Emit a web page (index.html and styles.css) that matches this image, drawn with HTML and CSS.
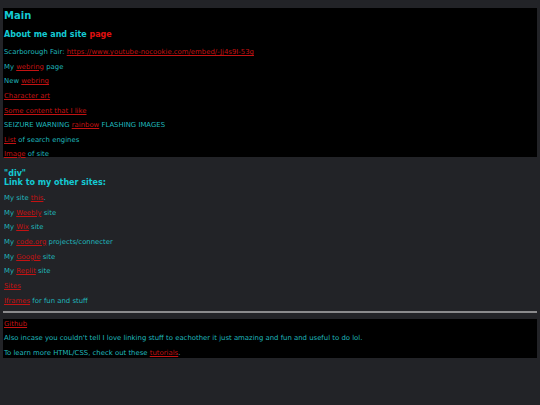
FILE: index.html
```html
<!DOCTYPE html>
<html>
<head>
<meta charset="utf-8">
<link rel="stylesheet" href="styles.css">
</head>
<body>
<div class="box top">
  <h1 class="title">Main</h1>
  <h2 class="sub">About me and site <a href="#">page</a></h2>
  <p>Scarborough Fair: <a href="#">https://www.youtube-nocookie.com/embed/-Jj4s9I-53g</a></p>
  <p>My <a href="#">webring</a> page</p>
  <p>New <a href="#">webring</a></p>
  <p><a href="#">Character art</a></p>
  <p><a href="#">Some content that I like</a></p>
  <p>SEIZURE WARNING <a href="#">rainbow</a> FLASHING IMAGES</p>
  <p><a href="#">List</a> of search engines</p>
  <p class="last"><a href="#">Image</a> of site</p>
</div>
<div class="middle">
  <h2 class="sub tight">"div"<br>Link to my other sites:</h2>
  <p>My site <a href="#">this</a>.</p>
  <p>My <a href="#">Weebly</a> site</p>
  <p>My <a href="#">Wix</a> site</p>
  <p>My <a href="#">code.org</a> projects/connecter</p>
  <p>My <a href="#">Google</a> site</p>
  <p>My <a href="#">Replit</a> site</p>
  <p><a href="#">Sites</a></p>
  <p><a href="#">Iframes</a> for fun and stuff</p>
</div>
<hr class="rule">
<div class="box bottom">
  <p class="first"><a href="#">Github</a></p>
  <p>Also incase you couldn't tell I love linking stuff to eachother it just amazing and fun and useful to do lol.</p>
  <p class="end">To learn more HTML/CSS, check out these <a href="#">tutorials</a>.</p>
</div>
</body>
</html>
```
FILE: styles.css
```css
html {
  background: #222327;
}
body {
  margin: 8px 3px;
  font-family: "DejaVu Sans", Verdana, sans-serif;
  color: #1fb8bd;
  font-size: 6.9px;
}
a {
  color: #c41212;
  text-decoration: underline;
}
.box {
  background: #000;
  display: flow-root;
}
.title {
  font-size: 10px;
  line-height: 16px;
  margin: 0 0 5px 1px;
  color: #14cad4;
}
.sub {
  font-size: 8px;
  line-height: 12px;
  margin: 0 0 7px 1px;
  color: #14cad4;
}
.sub a {
  color: #e01010;
  text-decoration: none;
}
.tight {
  line-height: 9px;
  margin: 12px 0 7px 1px;
}
p {
  margin: 6.7px 0 6.7px 1px;
  line-height: 8px;
}
.box p.last {
  margin-bottom: 0;
  line-height: 6px;
}
.box p.end {
  margin-bottom: 1px;
}
.middle p:last-child {
  margin-bottom: 6px;
}
.rule {
  margin: 0;
  border: 0;
  border-top: 2px solid #8a8a8c;
}
.bottom {
  margin-top: 6px;
}
.bottom p.first {
  margin-top: 1px;
}
```
